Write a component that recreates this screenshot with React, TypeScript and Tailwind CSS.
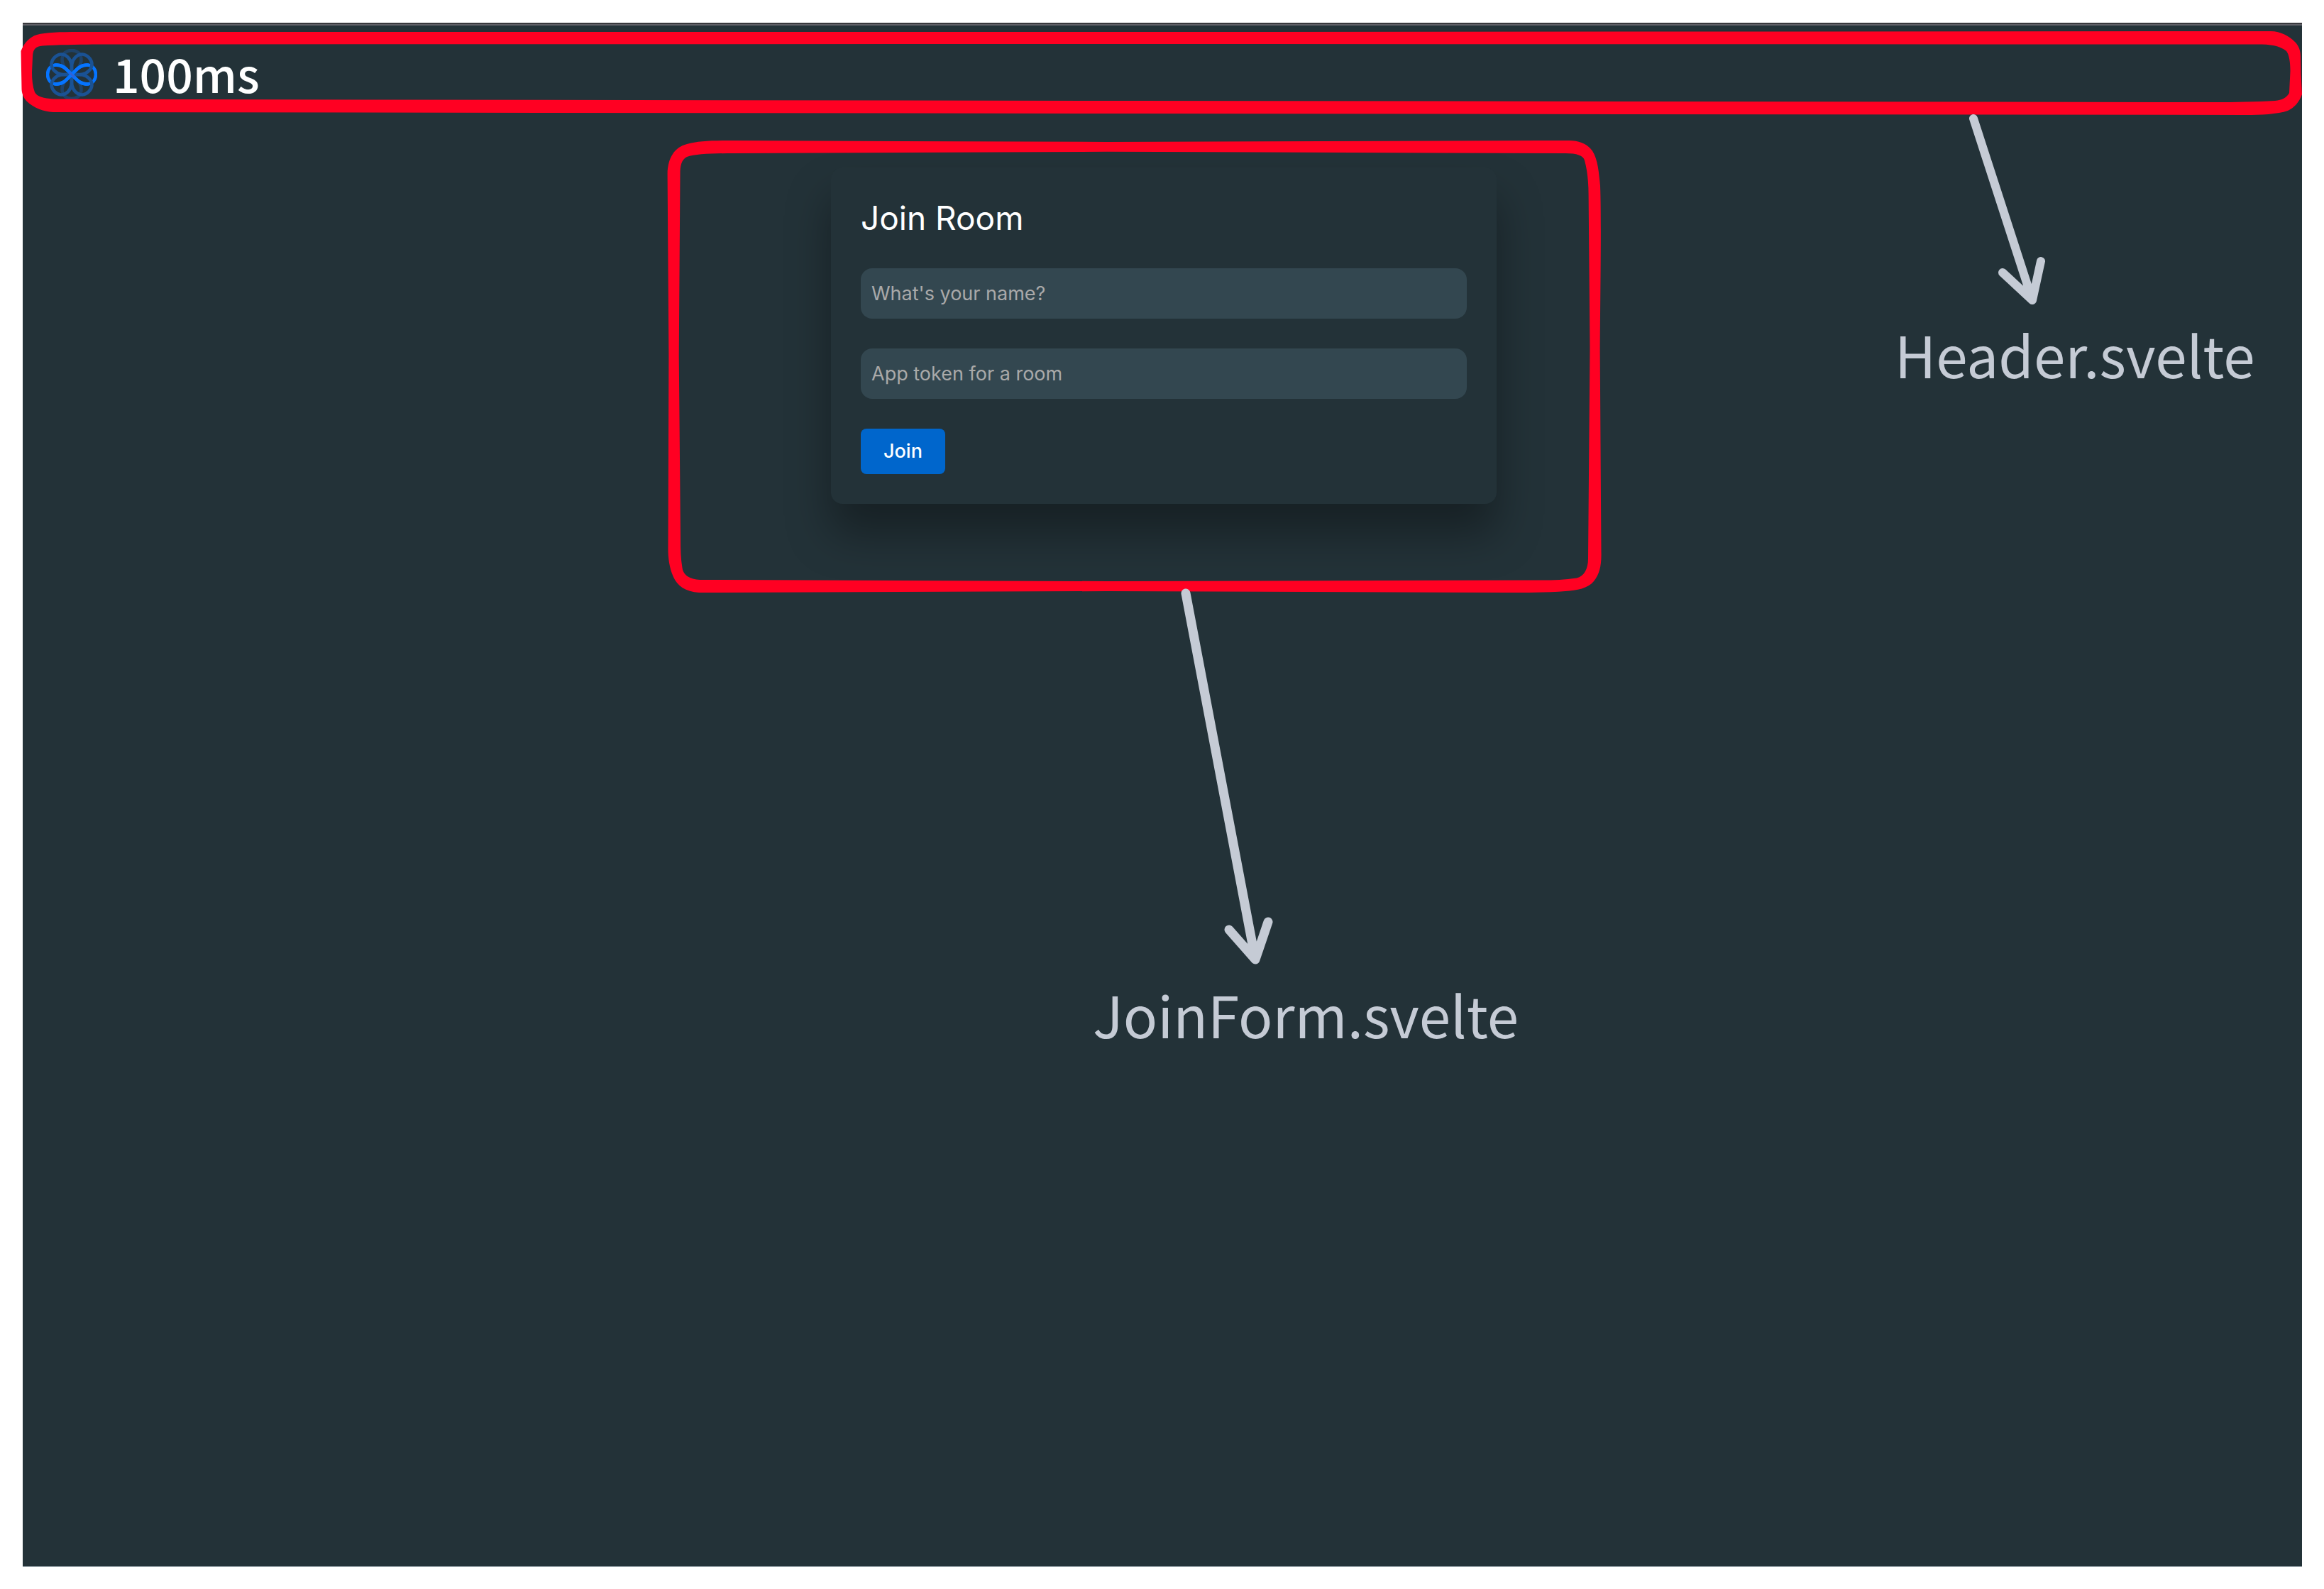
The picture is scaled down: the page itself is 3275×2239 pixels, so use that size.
const INFINITY =
  "M0 0C-8 -8 -12 -13.5 -21 -13.5C-30 -13.5 -34 -7 -34 0C-34 7 -30 13.5 -21 13.5C-12 13.5 -8 8 0 0C8 -8 12 -13.5 21 -13.5C30 -13.5 34 -7 34 0C34 7 30 13.5 21 13.5C12 13.5 8 8 0 0Z";

function Logo() {
  return (
    <svg viewBox="-36 -36 72 72" className="size-[72px]" fill="none" strokeWidth="4.6" strokeLinecap="round" aria-hidden="true">
      <path d={INFINITY} stroke="#1e4268" transform="rotate(90)" />
      <path d={INFINITY} stroke="#0574ff" />
      <path d={INFINITY} stroke="#1a5294" transform="rotate(45)" />
      <path d={INFINITY} stroke="#1a5294" transform="rotate(-45)" />
      <path
        d="M-23 -13.5C-12 -13.5 -8 -8 0 0C8 8 12 13.5 23 13.5M-23 13.5C-12 13.5 -8 8 0 0C8 -8 12 -13.5 23 -13.5"
        stroke="#0574ff"
      />
      <path d="M-3 -3L3 3" stroke="#2f62d8" strokeWidth="3" />
    </svg>
  );
}

function HeaderOutline() {
  return (
    <svg
      viewBox="29 43 3215 120"
      preserveAspectRatio="none"
      className="pointer-events-none absolute -left-[3px] right-0 top-[7px] h-[120px] w-[calc(100%+3px)]"
      aria-hidden="true"
    >
      <path
        fill="#ff0022"
        fillRule="evenodd"
        d="M29.5 72C34 60 42 52 52 49C64 45.500 85 45 110 45L1600 45L3200 44C3214 44 3226 51 3234 59C3240 65 3242 72 3242 80L3242.500 104L3244 133C3240 144 3233 152 3224 156C3210 161 3185 162 3165 162L1600 160L75 158C60 157 48 152 38 143C33 138 30.500 131 30.500 125Z
           M46 80C46.500 69 50 65.500 60 64.500C80 63 110 63 130 62.500L1600 62L3180 62.500C3200 62.500 3212 64 3222 72C3226 77 3227.500 88 3227.500 100L3226 131C3222 138 3216 141 3206 142C3180 143.500 3150 144 3120 144L1600 142L250 140L75 139.500C62 138.500 52 136 49 130C46 122 45 112 45 102Z"
      />
    </svg>
  );
}

function FormOutline() {
  return (
    <svg viewBox="940 197 1317 639" className="pointer-events-none absolute -left-[231px] -top-[39px] h-[639px] w-[1317px] max-w-none" aria-hidden="true">
      <path
        fill="#ff0022"
        fillRule="evenodd"
        d="M940.600 245C941 222 951 207 968 203C984 198.500 1005 198 1034 198L1560 200L2170 198L2211 198C2225 198 2234 202 2241 209C2251 219 2253 240 2255 262C2257 310 2255 420 2254.700 501L2256.500 778C2257 797 2254 809 2246 819C2238 829 2222 832 2206 833C2180 835 2150 835 2126 835L1560 833L985 835C966 834 954 825 949 813C943 800 941.500 785 941.500 774L942.400 501Z
           M958.500 245C958.500 234 960 225 968 221C980 217 1005 216 1034 216L1560 213.800L2206 216C2222 216 2231 219 2233 226C2237 240 2238.600 258 2238.600 275L2240.500 490L2238 787C2238 802 2232 812 2222 814.500C2205 817 2190 817.500 2173 817.500L1560 819L989 817C975 817 963 812 961.500 800C959 785 959 770 959 757L956.700 501Z"
      />
    </svg>
  );
}

function HeaderNote() {
  return (
    <div className="pointer-events-none absolute right-[62px] top-[126px] w-[512px]">
      <svg viewBox="2670 158 512 276" className="block h-[276px] w-full" fill="none" stroke="#c5cbd5" strokeWidth="12" strokeLinecap="round" strokeLinejoin="round" aria-hidden="true">
        <path d="M2781 167L2864 423M2822 384L2864 423L2876 368" />
      </svg>
      <p className="mt-5 whitespace-nowrap text-[80px] leading-[88px] text-[#c5cbd5] font-['Noto_Sans_CJK_SC',sans-serif]">
        Header.svelte
      </p>
    </div>
  );
}

function FormNote() {
  return (
    <div className="pointer-events-none absolute left-[369px] top-[592px] w-[604px]">
      <svg viewBox="1540 828 604 536" className="block h-[536px] w-full" fill="none" stroke="#c5cbd5" strokeWidth="13" strokeLinecap="round" strokeLinejoin="round" aria-hidden="true">
        <path d="M1671 836L1769 1352M1732 1310L1769 1352L1787 1299" />
      </svg>
      <p className="mt-5 whitespace-nowrap text-[80px] leading-[88px] text-[#c5cbd5] font-['Noto_Sans_CJK_SC',sans-serif]">
        JoinForm.svelte
      </p>
    </div>
  );
}

function Header() {
  return (
    <header className="relative flex items-center gap-[22px] p-[33px]">
      <Logo />
      <span className="pb-1.5 text-[66px] font-medium leading-[66px] text-white font-['Noto_Sans_CJK_SC',sans-serif]">100ms</span>
      <HeaderOutline />
    </header>
  );
}

function Field({ name, text }: { name: string; text: string }) {
  return (
    <input
      type="text"
      name={name}
      aria-label={text}
      placeholder={text}
      className="block h-[71px] w-full rounded-2xl bg-[#334750] px-[15px] text-[27px] text-white placeholder:text-[#a9a9a9]"
    />
  );
}

function JoinForm() {
  return (
    <form
      onSubmit={(e) => e.preventDefault()}
      className="relative flex w-[938px] flex-col items-stretch gap-[42px] rounded-2xl bg-[#233238] p-[42px] shadow-[0_42px_62px_rgba(0,0,0,0.35)]"
    >
      <h1 className="text-[46px] leading-[58px] text-white">Join Room</h1>
      <Field name="name" text="What's your name?" />
      <Field name="token" text="App token for a room" />
      <button type="submit" className="h-16 self-start rounded-lg bg-[#0066cc] px-8 text-[27px] font-medium text-white">
        Join
      </button>
      <FormOutline />
      <FormNote />
    </form>
  );
}

export default function App() {
  return (
    <div className="flex min-h-screen flex-col bg-white pb-[31px] pl-8 pr-[31px] pt-8 font-['Inter',sans-serif]">
      <div className="relative flex grow flex-col border-b border-[#a4afb5] bg-[#233238]">
        <div className="h-1 border-b-2 border-[#5f5f66] bg-[#38383c]" />
        <Header />
        <main className="flex justify-center pl-1 pt-[62px]">
          <JoinForm />
        </main>
        <HeaderNote />
      </div>
    </div>
  );
}
